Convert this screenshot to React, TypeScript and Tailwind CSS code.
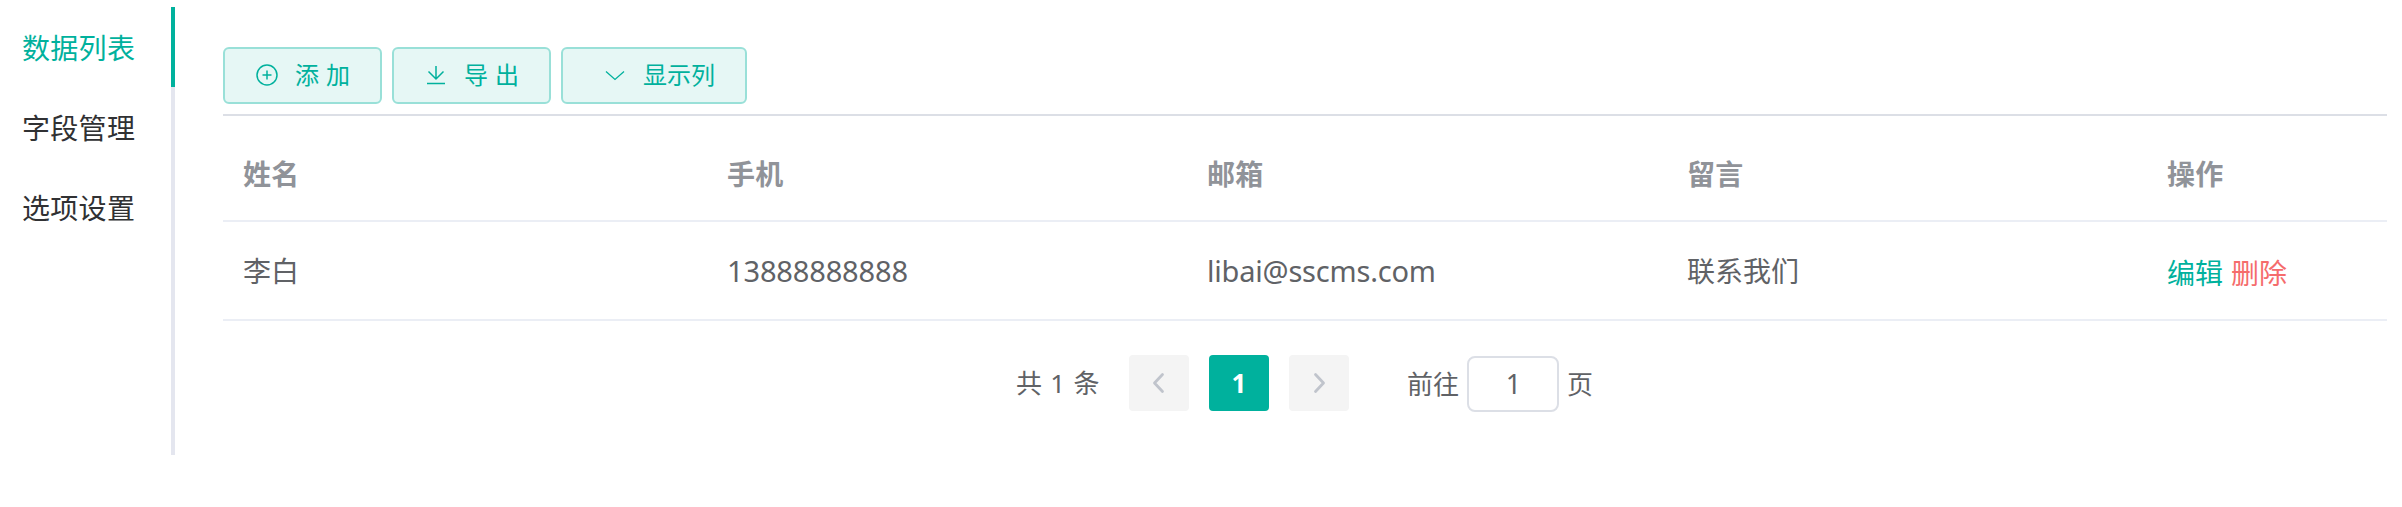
import type { ReactNode } from 'react';

const tabs = ['数据列表', '字段管理', '选项设置'];

function ToolButton({ icon, children, className }: { icon: ReactNode; children: ReactNode; className: string }) {
  return (
    <button
      className={`flex h-[57px] items-center rounded-[6px] border-2 border-[#99e0d8] bg-[#e6f7f5] pb-px text-2xl leading-none text-[#00b19d] ${className}`}
    >
      {icon}
      {children}
    </button>
  );
}

function PageButton({ d }: { d: string }) {
  return (
    <button className="flex h-14 w-15 items-center justify-center rounded-[4px] bg-[#f4f4f4] text-[#c0c4cc]">
      <svg width="24" height="24" viewBox="0 0 24 24" fill="none" stroke="currentColor" strokeWidth="2.8" strokeLinecap="round" strokeLinejoin="round">
        <path d={d} />
      </svg>
    </button>
  );
}

const cols = 'grid grid-cols-[484px_480px_480px_480px_240px]';

export default function App() {
  return (
    <div className="flex h-[507px] w-[2402px] items-start overflow-hidden bg-white font-['Noto_Sans','Noto_Sans_CJK_SC',sans-serif] text-[28px] leading-none text-[#606266]">
      <nav className="mt-[7px] flex h-[448px] w-[175px] flex-col text-[#303133]">
        {tabs.map((t, i) => (
          <a
            key={t}
            className={`flex h-20 shrink-0 items-center border-r-4 pt-[2px] pl-[22px] tracking-[0.3px] ${i === 0 ? 'border-[#00b19d] text-[#00b19d]' : 'border-[#e4e6ef]'}`}
          >
            {t}
          </a>
        ))}
        <div className="grow border-r-4 border-[#e4e6ef]" />
      </nav>

      <main className="ml-12 mt-[47px] flex w-[2164px] flex-col">
        <div className="flex gap-[10px]">
          <ToolButton
            className="w-[159px] pl-[31px]"
            icon={
              <svg className="mr-[15px]" width="24" height="24" viewBox="0 0 24 24" fill="none" stroke="currentColor" strokeWidth="1.5">
                <circle cx="11" cy="12" r="10" />
                <path d="M11 7.500v9M6.500 12h9" />
              </svg>
            }
          >
            <span className="tracking-[7px]">添加</span>
          </ToolButton>
          <ToolButton
            className="w-[159px] pl-[31px]"
            icon={
              <svg className="mr-[15px]" width="24" height="24" viewBox="0 0 24 24" fill="none" stroke="currentColor" strokeWidth="1.5">
                <path d="M11 3v13M3.500 8.500l7.500 7.500 7.500-7.500M2 20.500h18" />
              </svg>
            }
          >
            <span className="tracking-[7px]">导出</span>
          </ToolButton>
          <ToolButton
            className="w-[186px] pl-[41px]"
            icon={
              <svg className="mr-[15px]" width="24" height="24" viewBox="0 0 24 24" fill="none" stroke="currentColor" strokeWidth="1.3">
                <path d="M2 8.500l9 8 9-8" />
              </svg>
            }
          >
            <span>显示列</span>
          </ToolButton>
        </div>

        <section className="mt-[10px] border-t-2 border-[#dcdfe6]">
          <div className={`${cols} h-[106px] items-center border-b-2 border-[#ebeef5] pt-3 font-bold tracking-[0.3px] text-[#909399]`}>
            {['姓名', '手机', '邮箱', '留言', '操作'].map((h) => (
              <div key={h} className="px-5">{h}</div>
            ))}
          </div>
          <div className={`${cols} h-[99px] items-center border-b-2 border-[#ebeef5]`}>
            <div className="px-5">李白</div>
            <div className="px-5 text-[29px] leading-[28px] tracking-[-0.15px]">13888888888</div>
            <div className="px-5 text-[29px] leading-[28px] tracking-[-0.2px]">libai@sscms.com</div>
            <div className="px-5">联系我们</div>
            <div className="flex gap-2 pt-[5px] pl-5">
              <a className="text-[#00b19d]">编辑</a>
              <a className="text-[#f56c6c]">删除</a>
            </div>
          </div>
        </section>

        <footer className="mt-[34px] flex h-14 items-center pl-[793px] text-[26px]">
          <span className="w-[113px] whitespace-nowrap [word-spacing:1.5px]">共 1 条</span>
          <div className="flex gap-5">
            <PageButton d="M15.500 3.500 7.500 12l8 8.500" />
            <button className="flex h-14 w-15 items-center justify-center rounded-[4px] bg-[#00b19d] font-bold text-white">1</button>
            <PageButton d="M8.500 3.500l8 8.500-8 8.500" />
          </div>
          <span className="ml-[58px] w-[60px] pt-px">前往</span>
          <div className="mt-px flex h-14 w-[92px] items-center justify-center rounded-lg border-2 border-[#dcdfe6] pl-px text-[27px]">1</div>
          <span className="ml-2 pt-px">页</span>
        </footer>
      </main>
    </div>
  );
}
